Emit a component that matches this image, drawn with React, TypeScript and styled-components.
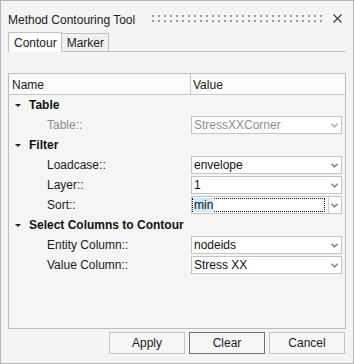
import React from 'react'
import styled, { createGlobalStyle } from 'styled-components'

const GlobalStyle = createGlobalStyle`
  html, body {
    margin: 0;
    padding: 0;
    background: #f4f4f4;
  }
  body {
    font-family: 'Liberation Sans', Arial, sans-serif;
    font-size: 12px;
    color: #1b1b1b;
  }
`

const Window = styled.div`
  width: 354px;
  height: 364px;
  box-sizing: border-box;
  border: 1px solid #b5b5b5;
  background: #f4f4f4;
  display: flex;
  flex-direction: column;
`

const TitleBar = styled.div`
  height: 31px;
  box-sizing: border-box;
  padding: 7px 11px 0 7px;
  display: flex;
  align-items: center;
`

const Title = styled.div`
  font-size: 12px;
  color: #1a1a1a;
  white-space: nowrap;
`

const Grip = styled.svg`
  margin-left: 17px;
  margin-top: -3px;
`

const CloseButton = styled.div`
  margin-left: auto;
  width: 10px;
  height: 10px;
  margin-top: -3px;
  display: flex;
  align-items: center;
  justify-content: center;
`

const TabStrip = styled.div`
  height: 20px;
  box-sizing: border-box;
  margin: 0 7px;
  border-bottom: 1px solid #c2c2c2;
  display: flex;
  align-items: flex-end;
`

const Tab = styled.div<{ $active?: boolean }>`
  height: ${(p) => (p.$active ? '20px' : '18px')};
  margin-bottom: ${(p) => (p.$active ? '-1px' : '0')};
  box-sizing: border-box;
  padding: 0 4px 0 5px;
  display: flex;
  align-items: center;
  border: 1px solid #c2c2c2;
  border-bottom: none;
  border-left-width: ${(p) => (p.$active ? '1px' : '0')};
  background: ${(p) => (p.$active ? '#fdfdfd' : '#f0f0f0')};
  color: #1b1b1b;
`

const PanelBody = styled.div`
  flex: 1;
  display: flex;
  flex-direction: column;
  padding: 21px 7px 0 7px;
`

const Tree = styled.div`
  height: 256px;
  box-sizing: border-box;
  border: 1px solid #bcbcbc;
  background: #f5f5f5;
  display: flex;
  flex-direction: column;
`

const HeaderRow = styled.div`
  height: 21px;
  box-sizing: border-box;
  border-bottom: 1px solid #c6c6c6;
  background: #fbfbfb;
  display: grid;
  grid-template-columns: 182px 1fr;
`

const HeaderCell = styled.div<{ $divider?: boolean }>`
  display: flex;
  align-items: center;
  padding-left: ${(p) => (p.$divider ? '3px' : '2px')};
  padding-top: 1px;
  border-right: ${(p) => (p.$divider ? '1px solid #c6c6c6' : 'none')};
  color: #1b1b1b;
`

const Row = styled.div`
  height: 20px;
  display: grid;
  grid-template-columns: 182px 151px;
  align-items: center;
`

const GroupLabel = styled.div`
  display: flex;
  align-items: center;
  padding-left: 6px;
  font-weight: bold;
  color: #111;
  white-space: nowrap;
`

const Caret = styled.span`
  width: 0;
  height: 0;
  border-left: 3px solid transparent;
  border-right: 3px solid transparent;
  border-top: 3px solid #222;
  margin-right: 8px;
`

const FieldLabel = styled.div<{ $disabled?: boolean }>`
  padding-left: 38px;
  color: ${(p) => (p.$disabled ? '#8c8a96' : '#1b1b1b')};
  white-space: nowrap;
`

const Select = styled.div<{ $disabled?: boolean }>`
  height: 18px;
  box-sizing: border-box;
  border: 1px solid #c4c4c4;
  background: #fff;
  display: flex;
  align-items: center;
  color: ${(p) => (p.$disabled ? '#8e8e8e' : '#111')};
`

const SelectText = styled.div<{ $focused?: boolean }>`
  flex: 1;
  align-self: stretch;
  display: flex;
  align-items: center;
  padding-left: 1px;
  margin: ${(p) => (p.$focused ? '1px 3px 1px 0' : '0')};
  border: ${(p) => (p.$focused ? '1px dotted #111' : '1px solid transparent')};
  box-sizing: border-box;
  span {
    background: ${(p) => (p.$focused ? '#cde8fb' : 'transparent')};
  }
`

const ArrowBox = styled.div<{ $split?: boolean }>`
  width: 11px;
  align-self: stretch;
  display: flex;
  align-items: center;
  justify-content: center;
  border-left: ${(p) => (p.$split ? '1px solid #d0d0d0' : 'none')};
  margin-right: 1px;
`

const ButtonRow = styled.div`
  display: flex;
  justify-content: flex-end;
  gap: 4px;
  margin-top: 3px;
  padding-right: 1px;
`

const Button = styled.button<{ $default?: boolean }>`
  width: 76px;
  height: 22px;
  box-sizing: border-box;
  border: 1px solid ${(p) => (p.$default ? '#707070' : '#c4c4c4')};
  background: #f6f6f6;
  font-family: 'Liberation Sans', Arial, sans-serif;
  font-size: 12px;
  color: #1b1b1b;
  padding: 0;
`

function Arrow({ disabled }: { disabled?: boolean }) {
  return (
    <svg width="7" height="5" viewBox="0 0 7 5">
      <polyline
        points="0.5,0.8 3.5,3.8 6.5,0.8"
        fill="none"
        stroke={disabled ? '#b4b4b4' : '#8a8a8a'}
        strokeWidth="1.6"
      />
    </svg>
  )
}

function Dropdown({
  value,
  disabled,
  focused,
}: {
  value: string
  disabled?: boolean
  focused?: boolean
}) {
  return (
    <Select $disabled={disabled}>
      <SelectText $focused={focused}>
        <span>{value}</span>
      </SelectText>
      <ArrowBox $split={focused}>
        <Arrow disabled={disabled} />
      </ArrowBox>
    </Select>
  )
}

function GripDots() {
  const dots = []
  for (let i = 0; i < 29; i++) {
    dots.push(<rect key={'a' + i} x={i * 6} y={0} width={2} height={2} fill="#9a9a9a" />)
    dots.push(<rect key={'b' + i} x={i * 6} y={5} width={2} height={2} fill="#9a9a9a" />)
  }
  return (
    <Grip width="170" height="7" viewBox="0 0 170 7">
      {dots}
    </Grip>
  )
}

const fields = [
  { group: 'Table', items: [{ label: 'Table::', value: 'StressXXCorner', disabled: true }] },
  {
    group: 'Filter',
    items: [
      { label: 'Loadcase::', value: 'envelope' },
      { label: 'Layer::', value: '1' },
      { label: 'Sort::', value: 'min', focused: true },
    ],
  },
  {
    group: 'Select Columns to Contour',
    items: [
      { label: 'Entity Column::', value: 'nodeids' },
      { label: 'Value Column::', value: 'Stress XX' },
    ],
  },
]

export default function App(): JSX.Element {
  return (
    <>
      <GlobalStyle />
      <Window>
        <TitleBar>
          <Title>Method Contouring Tool</Title>
          <GripDots />
          <CloseButton>
            <svg width="9" height="9" viewBox="0 0 9 9">
              <path d="M0.5 0.5 L8.5 8.5 M8.5 0.5 L0.5 8.5" stroke="#3a3a3a" strokeWidth="1.1" />
            </svg>
          </CloseButton>
        </TitleBar>
        <TabStrip>
          <Tab $active>Contour</Tab>
          <Tab>Marker</Tab>
        </TabStrip>
        <PanelBody>
          <Tree>
            <HeaderRow>
              <HeaderCell $divider>Name</HeaderCell>
              <HeaderCell>Value</HeaderCell>
            </HeaderRow>
            {fields.map((g) => (
              <React.Fragment key={g.group}>
                <Row>
                  <GroupLabel>
                    <Caret />
                    {g.group}
                  </GroupLabel>
                </Row>
                {g.items.map((f: any) => (
                  <Row key={f.label}>
                    <FieldLabel $disabled={f.disabled}>{f.label}</FieldLabel>
                    <Dropdown value={f.value} disabled={f.disabled} focused={f.focused} />
                  </Row>
                ))}
              </React.Fragment>
            ))}
          </Tree>
          <ButtonRow>
            <Button>Apply</Button>
            <Button $default>Clear</Button>
            <Button>Cancel</Button>
          </ButtonRow>
        </PanelBody>
      </Window>
    </>
  )
}
